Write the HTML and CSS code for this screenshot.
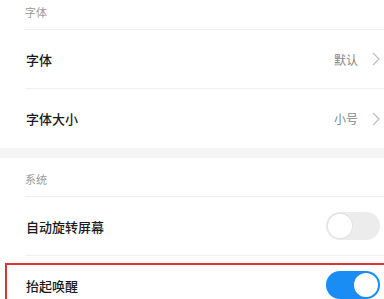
FILE: index.html
```html
<!doctype html>
<html lang="zh-CN">
 <head>
  <meta charset="UTF-8">
  <meta name="viewport" content="width=device-width, initial-scale=1.0">
  <title>设置</title>
  <link rel="stylesheet" href="styles.css">
 </head>
 <body>
  <div class="settings">
   <div class="section">
    <div class="section-title first">字体</div>
    <div class="item">
     <span class="label">字体</span>
     <span class="value">默认</span>
     <svg class="chevron" width="8" height="14" viewBox="0 0 8 14"><path d="M1 1 L7 7 L1 13" fill="none" stroke="#bdbdbd" stroke-width="1.2"/></svg>
    </div>
    <div class="item">
     <span class="label">字体大小</span>
     <span class="value">小号</span>
     <svg class="chevron" width="8" height="14" viewBox="0 0 8 14"><path d="M1 1 L7 7 L1 13" fill="none" stroke="#bdbdbd" stroke-width="1.2"/></svg>
    </div>
   </div>
   <div class="gap"></div>
   <div class="section">
    <div class="section-title">系统</div>
    <div class="item">
     <span class="label">自动旋转屏幕</span>
     <span class="switch"></span>
    </div>
    <div class="item highlighted">
     <span class="label">抬起唤醒</span>
     <span class="switch on"></span>
     <div class="mark"></div>
    </div>
   </div>
  </div>
 </body>
</html>
```

FILE: styles.css
```css
* {
  margin: 0;
  padding: 0;
  box-sizing: border-box;
}

body {
  background: #fff;
  font-family: "Noto Sans CJK SC", "Noto Sans", sans-serif;
  color: #1a1a1a;
  overflow: hidden;
}

.section {
  padding-left: 25px;
}

.section-title {
  height: 38px;
  display: flex;
  align-items: center;
  padding-top: 3px;
  font-size: 11px;
  color: #9a9a9a;
}

.section-title.first {
  margin-top: -9px;
}

.item {
  height: 60px;
  border-top: 1px solid #efefef;
  display: flex;
  align-items: center;
  padding-right: 4px;
  position: relative;
}

.section-title + .item {
  height: 59px;
}

.label {
  flex: 1;
  font-size: 13px;
  font-weight: 500;
  padding-left: 1px;
}

.value {
  font-size: 12px;
  color: #858585;
  margin-right: 14px;
}

.chevron {
  display: block;
}

.gap {
  height: 10px;
  background: #f5f5f5;
}

.switch {
  width: 54px;
  height: 28px;
  border-radius: 14px;
  background: #ececec;
  position: relative;
  margin-top: -1px;
}

.switch::after {
  content: '';
  position: absolute;
  top: 2px;
  left: 2px;
  width: 24px;
  height: 24px;
  border-radius: 50%;
  background: #fff;
  box-shadow: 0 0 0 1px #e2e2e2;
}

.switch.on {
  background: #1a8df5;
}

.switch.on::after {
  left: 28px;
  box-shadow: none;
}

.mark {
  position: absolute;
  top: 7px;
  left: -20px;
  right: -6px;
  bottom: -30px;
  border: 2px solid #d8343a;
  pointer-events: none;
}
```
